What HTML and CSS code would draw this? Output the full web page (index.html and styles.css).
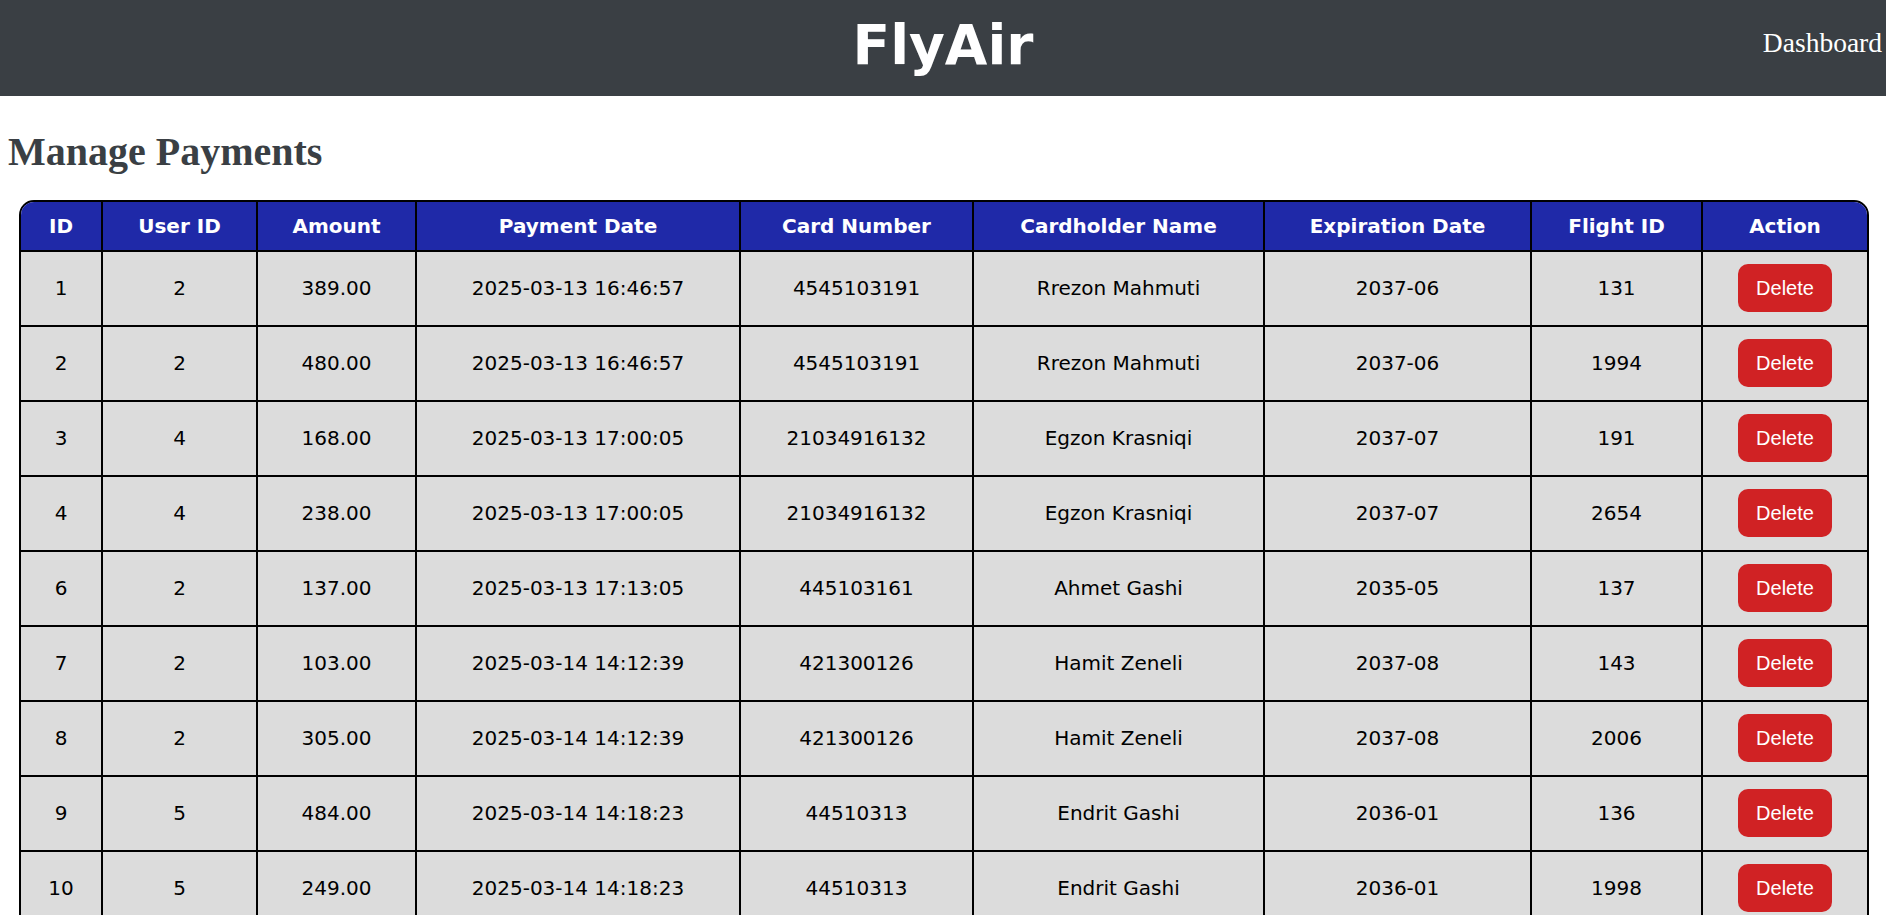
FILE: index.html
```html
<!DOCTYPE html>
<html lang="en">
<head>
<meta charset="utf-8">
<title>FlyAir - Manage Payments</title>
<link rel="stylesheet" href="styles.css">
</head>
<body>
<header class="topbar">
  <div class="topbar-side"></div>
  <div class="brand">FlyAir</div>
  <nav class="topbar-nav"><a class="nav-link" href="#">Dashboard</a></nav>
</header>
<main class="content">
  <h1 class="page-title">Manage Payments</h1>
  <table class="payments">
    <thead>
      <tr>
        <th class="c-id">ID</th>
        <th class="c-user">User ID</th>
        <th class="c-amount">Amount</th>
        <th class="c-date">Payment Date</th>
        <th class="c-card">Card Number</th>
        <th class="c-name">Cardholder Name</th>
        <th class="c-exp">Expiration Date</th>
        <th class="c-flight">Flight ID</th>
        <th class="c-action">Action</th>
      </tr>
    </thead>
    <tbody>
      <tr><td>1</td><td>2</td><td>389.00</td><td>2025-03-13 16:46:57</td><td>4545103191</td><td>Rrezon Mahmuti</td><td>2037-06</td><td>131</td><td><button class="btn-delete">Delete</button></td></tr>
      <tr><td>2</td><td>2</td><td>480.00</td><td>2025-03-13 16:46:57</td><td>4545103191</td><td>Rrezon Mahmuti</td><td>2037-06</td><td>1994</td><td><button class="btn-delete">Delete</button></td></tr>
      <tr><td>3</td><td>4</td><td>168.00</td><td>2025-03-13 17:00:05</td><td>21034916132</td><td>Egzon Krasniqi</td><td>2037-07</td><td>191</td><td><button class="btn-delete">Delete</button></td></tr>
      <tr><td>4</td><td>4</td><td>238.00</td><td>2025-03-13 17:00:05</td><td>21034916132</td><td>Egzon Krasniqi</td><td>2037-07</td><td>2654</td><td><button class="btn-delete">Delete</button></td></tr>
      <tr><td>6</td><td>2</td><td>137.00</td><td>2025-03-13 17:13:05</td><td>445103161</td><td>Ahmet Gashi</td><td>2035-05</td><td>137</td><td><button class="btn-delete">Delete</button></td></tr>
      <tr><td>7</td><td>2</td><td>103.00</td><td>2025-03-14 14:12:39</td><td>421300126</td><td>Hamit Zeneli</td><td>2037-08</td><td>143</td><td><button class="btn-delete">Delete</button></td></tr>
      <tr><td>8</td><td>2</td><td>305.00</td><td>2025-03-14 14:12:39</td><td>421300126</td><td>Hamit Zeneli</td><td>2037-08</td><td>2006</td><td><button class="btn-delete">Delete</button></td></tr>
      <tr><td>9</td><td>5</td><td>484.00</td><td>2025-03-14 14:18:23</td><td>44510313</td><td>Endrit Gashi</td><td>2036-01</td><td>136</td><td><button class="btn-delete">Delete</button></td></tr>
      <tr><td>10</td><td>5</td><td>249.00</td><td>2025-03-14 14:18:23</td><td>44510313</td><td>Endrit Gashi</td><td>2036-01</td><td>1998</td><td><button class="btn-delete">Delete</button></td></tr>
    </tbody>
  </table>
</main>
</body>
</html>
```

FILE: styles.css
```css
* {
  box-sizing: border-box;
}

html, body {
  margin: 0;
  padding: 0;
  background: #ffffff;
}

body {
  font-family: "Liberation Serif", "Times New Roman", serif;
}

.topbar {
  display: grid;
  grid-template-columns: 1fr auto 1fr;
  height: 96px;
  background: #3a3f44;
  color: #ffffff;
}

.brand {
  padding-top: 13px;
  font-family: "DejaVu Sans", Verdana, sans-serif;
  font-weight: bold;
  font-size: 55px;
  line-height: 64px;
  color: #ffffff;
}

.topbar-nav {
  display: flex;
  justify-content: flex-end;
  align-items: flex-start;
  padding-top: 27px;
  padding-right: 4px;
}

.nav-link {
  font-family: "Liberation Serif", "Times New Roman", serif;
  font-size: 27.5px;
  color: #ffffff;
  text-decoration: none;
}

.content {
  padding: 0;
}

.page-title {
  margin: 32px 0 25px 8px;
  font-family: "Liberation Serif", "Times New Roman", serif;
  font-weight: bold;
  font-size: 40px;
  color: #3a3f44;
}

.payments {
  width: 1850px;
  margin-left: 19px;
  border-collapse: separate;
  border-spacing: 0;
  border: 2px solid #000000;
  border-radius: 15px 15px 0 0;
  table-layout: fixed;
  font-family: "DejaVu Sans", Verdana, sans-serif;
  font-size: 20px;
  color: #000000;
}

.payments th,
.payments td {
  text-align: center;
  vertical-align: middle;
  border-right: 2px solid #000000;
  border-bottom: 2px solid #000000;
}

.payments th:last-child,
.payments td:last-child {
  border-right: none;
}

.payments th {
  background: #1f29a8;
  color: #ffffff;
  font-weight: bold;
  line-height: 24px;
  padding: 12px 4px;
}

.payments th:first-child {
  border-top-left-radius: 13px;
}

.payments th:last-child {
  border-top-right-radius: 13px;
}

.payments td {
  background: #dcdcdc;
  line-height: 24px;
  padding: 12px 4px 13px;
}

.c-id { width: 82px; }
.c-user { width: 155px; }
.c-amount { width: 159px; }
.c-date { width: 324px; }
.c-card { width: 233px; }
.c-name { width: 291px; }
.c-exp { width: 267px; }
.c-flight { width: 171px; }
.c-action { width: 164px; }

.btn-delete {
  display: inline-block;
  height: 48px;
  padding: 0 18px;
  border: none;
  border-radius: 10px;
  background: #d02224;
  color: #ffffff;
  font-family: "Liberation Sans", Arial, sans-serif;
  font-size: 20px;
  line-height: 48px;
  cursor: pointer;
  vertical-align: middle;
}
```
